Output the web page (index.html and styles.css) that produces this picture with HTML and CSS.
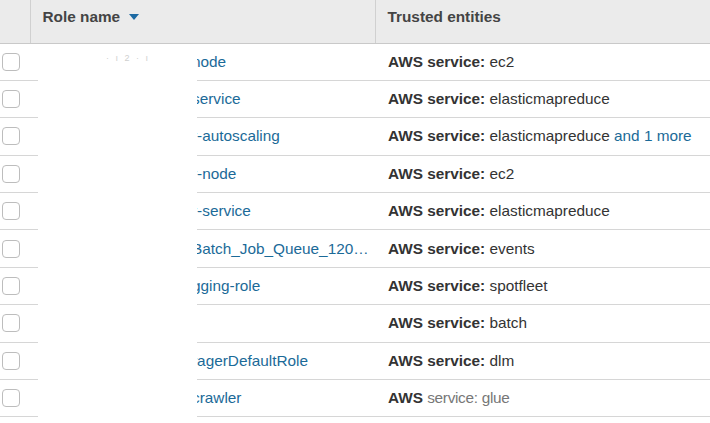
FILE: index.html
```html
<!DOCTYPE html>
<html>
<head>
<meta charset="utf-8">
<link rel="stylesheet" href="styles.css">
</head>
<body>
<div class="wrap">
  <table class="roles">
    <thead>
      <tr>
        <th class="col-check"></th>
        <th class="col-name">Role name <span class="sort"></span></th>
        <th class="col-trust">Trusted entities</th>
      </tr>
    </thead>
    <tbody>
      <tr><td class="col-check"><span class="cb"></span></td><td class="col-name"><a>node</a></td><td class="col-trust"><b>AWS service:</b> ec2</td></tr>
      <tr><td class="col-check"><span class="cb"></span></td><td class="col-name"><a>service</a></td><td class="col-trust"><b>AWS service:</b> elasticmapreduce</td></tr>
      <tr><td class="col-check"><span class="cb"></span></td><td class="col-name"><a>r-autoscaling</a></td><td class="col-trust"><b>AWS service:</b> elasticmapreduce <a>and 1 more</a></td></tr>
      <tr><td class="col-check"><span class="cb"></span></td><td class="col-name"><a>r-node</a></td><td class="col-trust"><b>AWS service:</b> ec2</td></tr>
      <tr><td class="col-check"><span class="cb"></span></td><td class="col-name"><a>r-service</a></td><td class="col-trust"><b>AWS service:</b> elasticmapreduce</td></tr>
      <tr><td class="col-check"><span class="cb"></span></td><td class="col-name"><a>Batch_Job_Queue_120…</a></td><td class="col-trust"><b>AWS service:</b> events</td></tr>
      <tr><td class="col-check"><span class="cb"></span></td><td class="col-name"><a>gging-role</a></td><td class="col-trust"><b>AWS service:</b> spotfleet</td></tr>
      <tr><td class="col-check"><span class="cb"></span></td><td class="col-name"><a></a></td><td class="col-trust"><b>AWS service:</b> batch</td></tr>
      <tr><td class="col-check"><span class="cb"></span></td><td class="col-name"><a>ragerDefaultRole</a></td><td class="col-trust"><b>AWS service:</b> dlm</td></tr>
      <tr><td class="col-check"><span class="cb"></span></td><td class="col-name"><a>crawler</a></td><td class="col-trust"><b>AWS</b> <span class="garbled">service: glue</span></td></tr>
    </tbody>
  </table>
  <div class="mask"><span class="specks">· ı 2 ·  ı</span></div>
</div>
</body>
</html>
```

FILE: styles.css
```css
html, body {
  margin: 0;
  padding: 0;
  background: #fff;
}

body {
  font-family: "Liberation Sans", Arial, Helvetica, sans-serif;
  font-size: 15.35px;
  color: #333;
  overflow: hidden;
}

.wrap {
  position: relative;
  width: 710px;
}

.roles {
  width: 710px;
  border-collapse: collapse;
  table-layout: fixed;
}

.roles th {
  height: 43px;
  box-sizing: border-box;
  padding: 0 0 8px 12px;
  background: #ebebeb;
  color: #444;
  font-weight: bold;
  text-align: left;
  border-bottom: 1px solid #c9c9c9;
  border-left: 1px solid #d0d0d0;
}

.roles th.col-check {
  border-left: none;
}

.col-check { width: 30px; }
.col-name { width: 345px; }

.sort {
  display: inline-block;
  width: 0;
  height: 0;
  margin-left: 5px;
  vertical-align: middle;
  position: relative;
  top: -1px;
  border-left: 5px solid transparent;
  border-right: 5px solid transparent;
  border-top: 6px solid #1d6aa3;
}

.roles td {
  height: 36.4px;
  padding: 0;
  border-bottom: 1px solid #d6d6d6;
  white-space: nowrap;
  overflow: hidden;
}

.roles td.col-check {
  padding-left: 2px;
}

.roles td.col-name {
  padding-left: 162px;
}

.roles td.col-trust {
  padding-left: 13px;
}

.cb {
  display: block;
  width: 16px;
  height: 16px;
  border: 1px solid #bdbdbd;
  border-radius: 4px;
  background: #fff;
}

a {
  color: #1b6a98;
  text-decoration: none;
}

b {
  color: #333;
}

.garbled {
  color: #777;
  letter-spacing: -0.3px;
}

.mask {
  position: absolute;
  left: 38px;
  top: 44px;
  width: 159px;
  height: 380px;
  background: #fff;
}

.specks {
  position: absolute;
  left: 68px;
  top: 9px;
  font-size: 9px;
  color: #cfcfcf;
  letter-spacing: 2px;
}
```
